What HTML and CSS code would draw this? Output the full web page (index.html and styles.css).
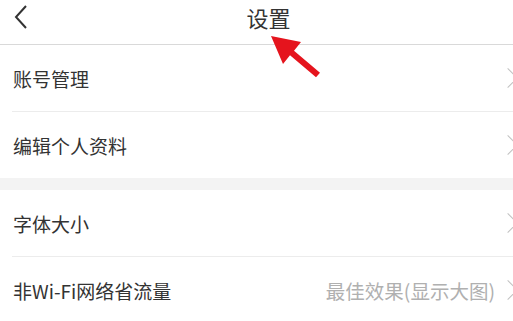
FILE: index.html
```html
<!DOCTYPE html>
<html lang="zh-CN">
<head>
<meta charset="utf-8">
<title>设置</title>
<link rel="stylesheet" href="styles.css">
</head>
<body>
<div class="page">
  <header class="topbar">
    <span class="back">
      <svg width="14" height="26" viewBox="0 0 14 26"><polyline points="12,2 2,13 12,24" fill="none" stroke="#333" stroke-width="2"/></svg>
    </span>
    <h1 class="title">设置</h1>
  </header>

  <section class="group">
    <div class="row"><span class="label">账号管理</span><span class="chev"></span></div>
    <div class="row"><span class="label">编辑个人资料</span><span class="chev"></span></div>
  </section>
  <div class="gap"></div>
  <section class="group">
    <div class="row"><span class="label">字体大小</span><span class="chev"></span></div>
    <div class="row"><span class="label">非Wi-Fi网络省流量</span><span class="value">最佳效果(显示大图)</span><span class="chev"></span></div>
  </section>

  <svg class="pointer" width="513" height="100" viewBox="0 0 513 100">
    <polygon points="271,36 301,42 294,50.7 320,72.7 316,77.3 290,55.3 283,64" fill="#e5141d"/>
  </svg>
</div>
</body>
</html>
```

FILE: styles.css
```css
html, body {
  margin: 0;
  padding: 0;
  background: #fff;
  overflow: hidden;
}
.page {
  position: relative;
  width: 513px;
  height: 321px;
  overflow: hidden;
  font-family: "Noto Sans CJK SC", "Noto Sans", sans-serif;
  color: #333;
}
.topbar {
  position: relative;
  height: 44px;
  border-bottom: 1px solid #d9d9d9;
  display: flex;
  align-items: flex-start;
  justify-content: center;
}
.back {
  position: absolute;
  left: 14px;
  top: 4px;
  display: flex;
}
.title {
  margin: 0;
  margin-top: 2px;
  font-size: 22px;
  font-weight: normal;
  line-height: 30px;
  color: #333;
  padding-left: 24px;
}
.group {
  margin-left: 12px;
}
.row {
  height: 66px;
  display: flex;
  align-items: center;
  border-bottom: 1px solid #ececec;
}
.row:last-child {
  border-bottom: none;
}
.label {
  flex: 1;
  font-size: 19px;
  padding-left: 1px;
  color: #333;
}
.value {
  font-size: 19.5px;
  color: #b0b0b0;
  margin-right: 6px;
}
.chev {
  width: 14px;
  height: 14px;
  box-sizing: border-box;
  border-top: 1.5px solid #c2c2c2;
  border-right: 1.5px solid #c2c2c2;
  transform: rotate(45deg);
  margin-right: -2px;
  flex-shrink: 0;
}
.gap {
  height: 12px;
  background: #f3f3f3;
}
.pointer {
  position: absolute;
  left: 0;
  top: 0;
  pointer-events: none;
}
```
